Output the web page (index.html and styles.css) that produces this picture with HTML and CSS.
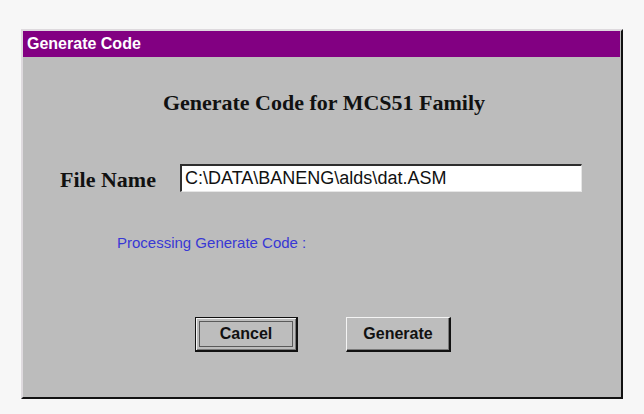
FILE: index.html
```html
<!DOCTYPE html>
<html>
<head>
<meta charset="utf-8">
<link rel="stylesheet" href="styles.css">
</head>
<body>
<div class="dialog">
  <div class="titlebar">Generate Code</div>
  <div class="content">
    <h1 class="heading">Generate Code for MCS51 Family</h1>
    <div class="file-row">
      <label class="file-label">File Name</label>
      <div class="file-input">C:\DATA\BANENG\alds\dat.ASM</div>
    </div>
    <div class="status">Processing Generate Code :</div>
    <div class="buttons">
      <div class="btn btn-default"><span class="focus">Cancel</span></div>
      <div class="btn btn-normal"><span class="label">Generate</span></div>
    </div>
  </div>
</div>
</body>
</html>
```

FILE: styles.css
```css
html, body {
  margin: 0;
  padding: 0;
  background: #f7f7f7;
}
body {
  width: 644px;
  height: 414px;
  overflow: hidden;
}
.dialog {
  margin: 29px 0 0 21px;
  width: 602px;
  height: 370px;
  box-sizing: border-box;
  background: #bcbcbc;
  border-top: 2px solid #dedade;
  border-left: 2px solid #dedade;
  border-right: 2px solid #121212;
  border-bottom: 2px solid #121212;
  display: flex;
  flex-direction: column;
}
.titlebar {
  height: 26px;
  margin-right: 1px;
  background: #820082;
  color: #ffffff;
  font-family: "Liberation Sans", Arial, sans-serif;
  font-weight: bold;
  font-size: 16px;
  line-height: 26px;
  padding-left: 4px;
  box-sizing: border-box;
}
.content {
  display: flex;
  flex-direction: column;
}
.heading {
  margin: 33px 0 0 4px;
  font-family: "Liberation Serif", "Times New Roman", serif;
  font-weight: bold;
  font-size: 22px;
  line-height: 26px;
  text-align: center;
  color: #111;
}
.file-row {
  margin-top: 46px;
  display: flex;
  align-items: center;
  padding-left: 37px;
}
.file-label {
  width: 120px;
  padding-top: 5px;
  font-family: "Liberation Serif", "Times New Roman", serif;
  font-weight: bold;
  font-size: 22px;
  line-height: 26px;
  color: #111;
}
.file-input {
  width: 402px;
  height: 28px;
  box-sizing: border-box;
  background: #ffffff;
  border-top: 2px solid #2e2e2e;
  border-left: 2px solid #2e2e2e;
  border-right: 1px solid #e6e6e6;
  border-bottom: 1px solid #e6e6e6;
  padding-left: 3px;
  font-family: "Liberation Sans", Arial, sans-serif;
  font-size: 18px;
  line-height: 25px;
  color: #111;
  white-space: nowrap;
  overflow: hidden;
}
.status {
  margin-top: 41px;
  padding-left: 94px;
  font-family: "Liberation Sans", Arial, sans-serif;
  font-size: 15px;
  line-height: 18px;
  color: #3838d4;
}
.buttons {
  margin-top: 65px;
  padding-left: 172px;
  display: flex;
  gap: 48px;
}
.btn {
  height: 35px;
  box-sizing: border-box;
  display: flex;
  font-family: "Liberation Sans", Arial, sans-serif;
  font-weight: bold;
  font-size: 16px;
  color: #111;
  background: #bdbdbd;
}
.btn-default {
  width: 103px;
  border-top: 1px solid #111;
  border-left: 1px solid #111;
  border-right: 2px solid #111;
  border-bottom: 2px solid #111;
  box-shadow: inset 1px 1px #f4f4f4, inset -1px -1px #7a7a7a;
  padding: 3px;
}
.focus {
  flex: 1;
  border: 1px solid #5a5a5a;
  display: flex;
  align-items: center;
  justify-content: center;
}
.btn-normal {
  width: 105px;
  border-top: 1px solid #f4f4f4;
  border-left: 1px solid #f4f4f4;
  border-right: 2px solid #111;
  border-bottom: 2px solid #111;
  box-shadow: inset -1px -1px #7a7a7a;
}
.label {
  flex: 1;
  display: flex;
  align-items: center;
  justify-content: center;
}
```
